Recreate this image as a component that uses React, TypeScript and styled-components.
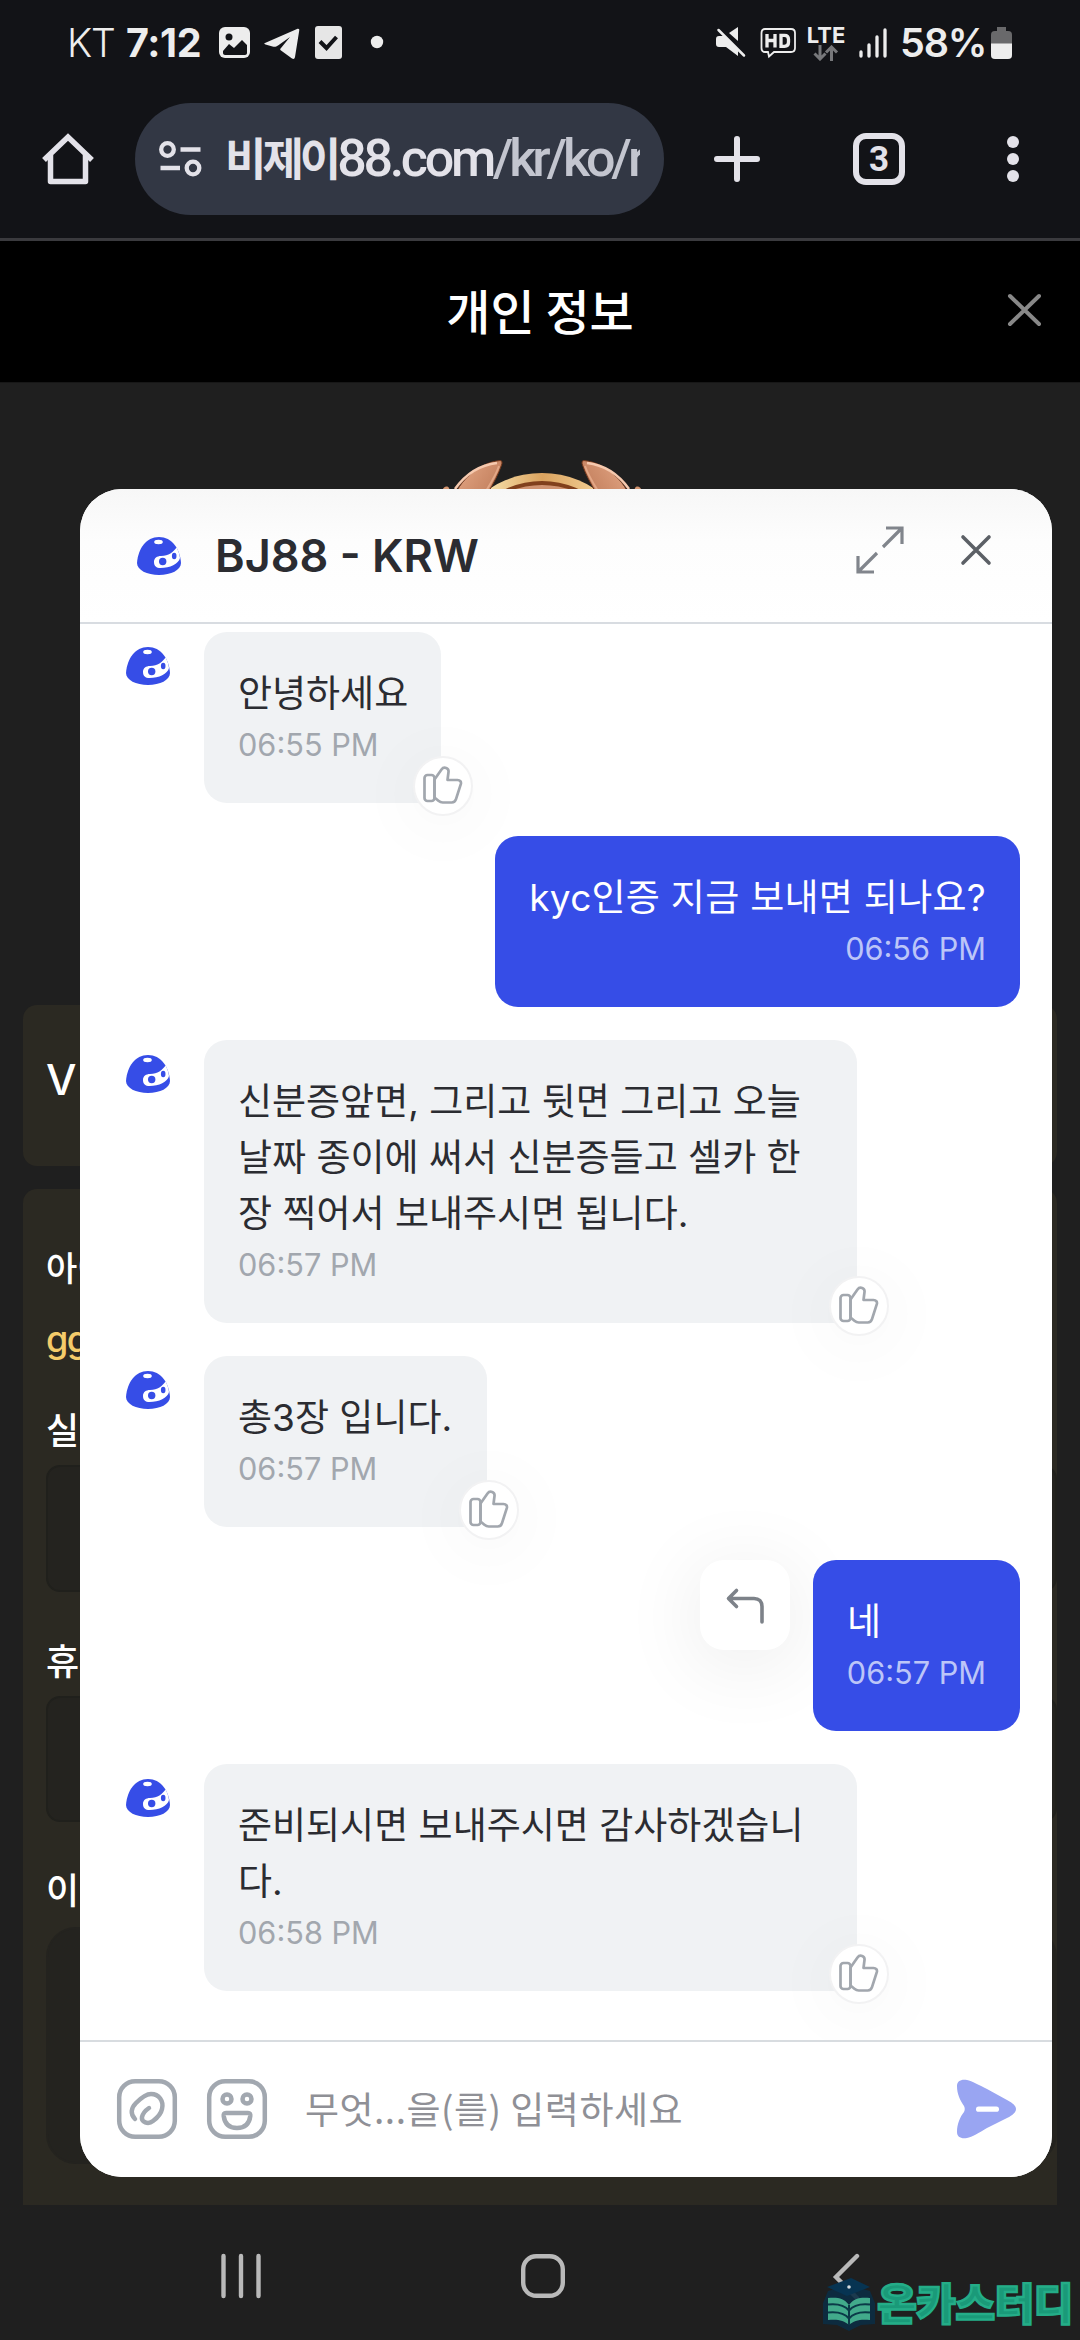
import React from "react";
import styled, { createGlobalStyle } from "styled-components";

const Global = createGlobalStyle`
  * { box-sizing: border-box; }
  body { margin: 0; background: #1f1f1f; }
`;

const Phone = styled.main`
  position: relative;
  width: 1080px;
  height: 2340px;
  overflow: hidden;
  background: #1f1f1f;
  display: flex;
  flex-direction: column;
  font-family: Inter, "Noto Sans CJK KR", sans-serif;
`;

const StatusBar = styled.div`
  height: 86px;
  flex: none;
  background: #121317;
  display: flex;
  align-items: center;
  padding: 0 68px 0 67px;
  color: #ededed;
`;
const Carrier = styled.span`
  font: 300 39px/40px Inter, sans-serif;
  letter-spacing: -1.2px;
  width: 59px;
  white-space: nowrap;
`;
const Clock = styled.span`
  font: 700 39.5px/40px Inter, sans-serif;
  letter-spacing: -0.4px;
  width: 93px;
  white-space: nowrap;
`;
const StatusIcons = styled.svg<{ $push?: boolean }>`
  display: block;
  flex: none;
  margin-left: ${(p) => (p.$push ? "auto" : "0")};
`;
const Network = styled.div`
  display: flex;
  flex-direction: column;
  align-items: center;
  width: 40px;
  margin-left: 9px;
  font: 700 22px/20px Inter, sans-serif;
`;
const Battery = styled.span`
  font: 600 39.5px/40px Inter, sans-serif;
  letter-spacing: -1.2px;
  width: 91px;
  margin-left: 13px;
  white-space: nowrap;
`;

const Toolbar = styled.div`
  height: 155px;
  flex: none;
  background: #121317;
  border-bottom: 3px solid #3a3a3e;
  display: flex;
  align-items: center;
  padding: 0 60px 7px 40px;
`;
const ToolIcon = styled.svg<{ $gap: number }>`
  flex: none;
  display: block;
  margin-left: ${(p) => p.$gap}px;
`;
const Omnibox = styled.div`
  width: 529px;
  height: 112px;
  flex: none;
  margin-left: 39px;
  border-radius: 56px;
  background: #323744;
  display: flex;
  align-items: center;
  padding: 0 23px 0 24px;
`;
const Address = styled.div`
  width: 415px;
  margin-left: 23px;
  overflow: hidden;
  white-space: nowrap;
  font: 500 52px/70px Roboto, "Noto Sans CJK KR", sans-serif;
  letter-spacing: -3.3px;
  color: #e3e2e9;
`;
const Host = styled.span`
  font: 700 45px/60px "Noto Sans CJK KR", sans-serif;
  letter-spacing: -4px;
`;
const Path = styled.span`
  color: #c3c5cf;
  letter-spacing: -4px;
`;
const Tabs = styled.div`
  width: 52px;
  height: 52px;
  flex: none;
  margin-left: 92px;
  border: 6px solid #e3e2e9;
  border-radius: 13px;
  color: #e3e2e9;
  font: 700 35px/41px Roboto, sans-serif;
  text-align: center;
`;

const PageHeader = styled.header`
  height: 142px;
  flex: none;
  background: #000;
  display: grid;
  grid-template-columns: 80px 1fr 80px;
  align-items: center;
  border-bottom: 1px solid #171717;
  padding-bottom: 3px;
`;
const PageTitle = styled.h1`
  margin: 0 0 3px;
  grid-column: 2;
  text-align: center;
  color: #fff;
  font: 500 48px/60px "Noto Sans CJK KR", sans-serif;
`;

const Profile = styled.section`
  flex: 1;
  display: flex;
  flex-direction: column;
  padding: 0 23px;
`;
const Medal = styled.svg`
  display: block;
  margin: 72px auto 0;
  flex: none;
`;
const Card = styled.div<{ $height: number; $top: number; $open?: boolean }>`
  height: ${(p) => p.$height}px;
  margin-top: ${(p) => p.$top}px;
  flex: none;
  background: #2b2922;
  border-radius: ${(p) => (p.$open ? "14px 14px 0 0" : "14px")};
  padding-left: 23px;
  display: flex;
  flex-direction: column;
`;
const Level = styled.div`
  color: #fff;
  font: 500 43px/52px Inter, sans-serif;
  padding-top: 48px;
`;
const Label = styled.div<{ $top: number; $size?: number }>`
  margin-top: ${(p) => p.$top}px;
  height: 50px;
  color: #fff;
  font: 500 ${(p) => p.$size ?? 36}px/50px "Noto Sans CJK KR", sans-serif;
`;
const Account = styled.div`
  margin-top: 22px;
  height: 50px;
  color: #f4cb6a;
  font: 500 36px/50px Inter, sans-serif;
  letter-spacing: -1.5px;
`;
const Field = styled.div<{ $height: number; $top: number; $big?: boolean }>`
  margin-top: ${(p) => p.$top}px;
  height: ${(p) => p.$height}px;
  border-radius: ${(p) => (p.$big ? 30 : 14)}px;
  background: #24231f;
  border: 2px solid ${(p) => (p.$big ? "#24231f" : "#20201c")};
`;

const NavBar = styled.nav`
  height: 135px;
  flex: none;
  display: flex;
  align-items: flex-start;
  padding-top: 47px;
  padding-left: 219px;
`;
const NavIcon = styled.svg<{ $gap?: number }>`
  display: block;
  margin-left: ${(p) => p.$gap ?? 0}px;
`;

const Watermark = styled.div`
  position: absolute;
  right: 7px;
  bottom: 6px;
  display: flex;
  align-items: center;
  gap: 2px;
`;
const Brand = styled.span`
  margin-bottom: 6px;
  font: 900 43px/54px "Noto Sans CJK KR", sans-serif;
  letter-spacing: -0.4px;
  color: #1a9a79;
  -webkit-text-stroke: 2.4px #24ad88;
  white-space: nowrap;
`;

const Widget = styled.section`
  position: absolute;
  left: 80px;
  top: 489px;
  width: 972px;
  height: 1688px;
  border-radius: 42px;
  overflow: hidden;
  background: #fff;
  display: flex;
  flex-direction: column;
  color: #2b2c31;
`;
const WidgetHeader = styled.header`
  height: 135px;
  flex: none;
  border-bottom: 2px solid #d8dce1;
  background: linear-gradient(#f7f7f7, #fdfdfd 40%, #fff);
  display: flex;
  align-items: center;
  padding-left: 57px;
`;
const WidgetTitle = styled.h2`
  margin: 0 0 0 34px;
  width: 640px;
  font: 600 45px/60px Inter, sans-serif;
  letter-spacing: 0;
`;
const Controls = styled.div`
  display: flex;
  align-items: center;
  gap: 54px;
  margin-top: -12px;
  margin-left: 0;
`;
const Thread = styled.div`
  flex: 1;
  overflow: hidden;
  display: flex;
  flex-direction: column;
  gap: 33px;
  padding: 8px 32px 0 46px;
`;
const Row = styled.div<{ $mine?: boolean }>`
  display: flex;
  align-items: flex-start;
  justify-content: ${(p) => (p.$mine ? "flex-end" : "flex-start")};
  gap: ${(p) => (p.$mine ? 23 : 35)}px;
`;
const AvatarSlot = styled.div`
  padding-top: 15px;
  width: 43px;
`;
const Bubble = styled.div<{ $mine?: boolean; $width: number }>`
  position: relative;
  width: ${(p) => p.$width}px;
  padding: 34px 0 35px ${(p) => (p.$mine ? 0 : 34)}px;
  padding-right: ${(p) => (p.$mine ? 34 : 0)}px;
  border-radius: 23px;
  background: ${(p) => (p.$mine ? "#364de7" : "#f0f2f4")};
  color: ${(p) => (p.$mine ? "#fff" : "#2b2c31")};
  text-align: ${(p) => (p.$mine ? "right" : "left")};
`;
const Line = styled.div<{ $spacing: number }>`
  font: 400 37px/56px Inter, "Noto Sans CJK KR", sans-serif;
  height: 56px;
  letter-spacing: ${(p) => p.$spacing}px;
  white-space: nowrap;
`;
const Short = styled(Line)`
  text-align: left;
  padding-left: 34px;
`;
const Time = styled.div<{ $mine?: boolean }>`
  font: 400 30.7px/46px Inter, sans-serif;
  height: 46px;
  color: ${(p) => (p.$mine ? "#bcc5f8" : "#a2a7ae")};
`;
const Like = styled.span`
  position: absolute;
  right: -32px;
  bottom: -13px;
  width: 60px;
  height: 60px;
  border-radius: 50%;
  border: 2px solid #f2f2f3;
  background: #fff;
  box-shadow: 0 8px 60px 20px rgba(0, 0, 0, 0.018);
  display: grid;
  place-items: center;
`;
const Reply = styled.button`
  width: 90px;
  height: 90px;
  padding: 0;
  border: 0;
  border-radius: 24px;
  background: #fff;
  box-shadow: 0 12px 80px 6px rgba(0, 0, 0, 0.07);
  display: grid;
  place-items: center;
`;
const Composer = styled.footer`
  height: 137px;
  flex: none;
  border-top: 2px solid #d8dce0;
  background: #fff;
  display: flex;
  align-items: center;
  padding: 0 34px 1px 36px;
`;
const ComposerIcon = styled.svg<{ $gap?: number }>`
  display: block;
  flex: none;
  margin-left: ${(p) => p.$gap ?? 0}px;
`;
const Placeholder = styled.div`
  flex: 1;
  margin: 0 0 3px 37px;
  font: 400 37px/56px "Noto Sans CJK KR", sans-serif;
  letter-spacing: 0.5px;
  color: #8f9096;
  white-space: nowrap;
`;

const HatIcon = styled.svg`
  display: block;
`;

const Hat = () => (
  <HatIcon width="44" height="38" viewBox="0 0 44 38">
    <path d="M0 26C1 12 9 0 22 0s21 12 22 26c0 7-10 12-22 12S0 33 0 26Z" fill="#364de7" />
    <ellipse cx="21.5" cy="5" rx="4.3" ry="2.2" fill="#fff" />
    <path d="M17 25c0-4 3-6 7-6 8 0 12-4 15.500-8.500 1.800 3 3 7 3.500 10.500-1.500 6-10 10-19.500 10-4 0-6.500-2-6.500-6Z" fill="#fff" />
    <circle cx="25.700" cy="24.500" r="3.700" fill="#364de7" />
    <ellipse cx="37.200" cy="19" rx="2.300" ry="3.200" fill="#364de7" />
  </HatIcon>
);

const LikeBadge = () => (
  <Like>
    <svg width="40" height="40" viewBox="0 0 40 40" fill="none" stroke="#a2a7ae" strokeWidth="2.700" strokeLinejoin="round">
      <rect x="1.500" y="9" width="10" height="26" rx="3" />
      <path d="M11.500 13.500 18.500 3.500c2.500-3.500 7.500-1.500 7 2.500l-1 8h10c2.500 0 4 1.800 3.300 4.200l-4.800 15c-.7 2.200-2 3.300-4.300 3.300h-9c-2 0-3-.7-4.300-1.800l-3.900-3.200Z" />
    </svg>
  </Like>
);

type Message = { lines: string[]; time: string; width: number; mine?: boolean; reply?: boolean; spacing?: number };

const messages: Message[] = [
  { lines: ["안녕하세요"], time: "06:55 PM", width: 237 },
  { lines: ["kyc인증 지금 보내면 되나요?"], time: "06:56 PM", width: 525, mine: true, spacing: 0.28 },
  { lines: ["신분증앞면, 그리고 뒷면 그리고 오늘", "날짜 종이에 써서 신분증들고 셀카 한", "장 찍어서 보내주시면 됩니다."], time: "06:57 PM", width: 653 },
  { lines: ["총3장 입니다."], time: "06:57 PM", width: 283 },
  { lines: ["네"], time: "06:57 PM", width: 207, mine: true, reply: true },
  { lines: ["준비되시면 보내주시면 감사하겠습니", "다."], time: "06:58 PM", width: 653 },
];

const MessageRow = ({ m }: { m: Message }) => {
  const Text = m.reply ? Short : Line;
  return (
    <Row $mine={m.mine}>
      {!m.mine && (
        <AvatarSlot>
          <Hat />
        </AvatarSlot>
      )}
      {m.reply && (
        <Reply aria-label="reply">
          <svg width="40" height="40" viewBox="0 0 40 40" fill="none" stroke="#7d8289" strokeWidth="3.600" strokeLinecap="round" strokeLinejoin="round">
            <path d="M11.500 5.500 3.500 13.500l8 8M3.500 13.500H29c5 0 8 3 8 8V37" />
          </svg>
        </Reply>
      )}
      <Bubble $mine={m.mine} $width={m.width}>
        {m.lines.map((l) => (
          <Text key={l} $spacing={m.spacing ?? 0}>{l}</Text>
        ))}
        <Time $mine={m.mine}>{m.time}</Time>
        {!m.mine && <LikeBadge />}
      </Bubble>
    </Row>
  );
};

const LeftStatus = () => (
  <StatusIcons width="170" height="36" viewBox="219 26 170 36">
    <rect x="219" y="28" width="31" height="31" rx="6" fill="#ededed" />
    <circle cx="229" cy="38" r="3.500" fill="#121317" />
    <path d="M223 52l6-7 5 4 8-8 5 5v8c0 1-1 2-2 2h-20c-1 0-2-1-2-2Z" fill="#121317" />
    <path d="M265 44 297 30c2-.7 2.500.3 2.200 1.800L295 58c-.4 2-1.500 2.500-3 1.500l-11-8c-1-.8-1-1.500-.2-2.300L290 38l-12 8.500c-2 1.400-3.500 1.500-5.500.9l-7-2c-1.500-.4-1.500-1-.5-1.400Z" fill="#ededed" />
    <rect x="315" y="27" width="27" height="33" rx="3" fill="#e6e6e6" />
    <path d="m320 42.500 6.500 6.500 10-11" fill="none" stroke="#121317" strokeWidth="4" />
    <circle cx="377" cy="43" r="6.200" fill="#ededed" />
  </StatusIcons>
);

const MedalHorn = () => (
  <>
    <path d="M453 505c3-20 24-42 48-44.500 2 0 2.500 2 1.500 4.500-3 9-8 18-13 27l-4 13Z" fill="url(#horn)" stroke="#74391d" strokeWidth="1" />
    <path d="M456 489c10-14 24-24 42-26" fill="none" stroke="#f6c9ae" strokeWidth="2.500" />
    <path d="M500 466c-3 9-8 17-13 25" fill="none" stroke="#e3a786" strokeWidth="2" />
    <path d="M443 491c1-4 5-6 7-3l1 4Z" fill="#d3946f" />
  </>
);

export default function App() {
  return (
    <>
      <Global />
      <Phone>
        <StatusBar>
          <Carrier>KT</Carrier>
          <Clock>7:12</Clock>
          <LeftStatus />
          <StatusIcons $push width="82" height="36" viewBox="715 26 82 36">
            <path d="M716 40c0-2 1-3 3-3h5l14 14v6l-12-9h-7c-2 0-3-1-3-3Z" fill="#ededed" />
            <path d="M729 34l9-6v14Z" fill="#ededed" />
            <path d="m718.500 31 25.500 25.500" stroke="#ededed" strokeWidth="2.500" strokeLinecap="round" />
            <path d="M765 30h26c2.500 0 4 1.500 4 4v15c0 2.500-1.500 4-4 4h-17l-5 4.500-1-4.500h-3c-2.200 0-3.500-1.500-3.500-4V34c0-2.500 1.300-4 3.500-4Z" fill="none" stroke="#ededed" strokeWidth="1.800" />
            <path d="M767 35v13.500M775 35v13.500M767 41.500h8M781 36.300v11h3.500c2.500 0 4-1.500 4-4v-3c0-2.500-1.500-4-4-4Z" fill="none" stroke="#ededed" strokeWidth="3.300" />
          </StatusIcons>
          <Network>
            LTE
            <svg width="26" height="16" viewBox="0 0 26 16" fill="none" stroke="#77787b" strokeWidth="3">
              <path d="M7 0v14M1.500 8.500 7 14l5.500-5.500M18.500 16V2M13 7.500 18.500 2 24 7.500" />
            </svg>
          </Network>
          <ToolIcon $gap={13} width="28" height="30" viewBox="0 0 28 30" stroke="#ededed" strokeWidth="3.300" strokeLinecap="round">
            <path d="M2 24v4M10 17v11M18 9v19M26 2v26" />
          </ToolIcon>
          <Battery>58%</Battery>
          <StatusIcons width="21" height="32" viewBox="0 0 21 32">
            <path d="M6 0h9v4h2c3 0 4 1.500 4 4v9H0V8c0-2.500 1-4 4-4h2Z" fill="#69696b" />
            <path d="M0 16.500h21V28c0 2.500-1 4-4 4H4c-3 0-4-1.500-4-4Z" fill="#ededed" />
          </StatusIcons>
        </StatusBar>

        <Toolbar>
          <ToolIcon $gap={0} width="56" height="56" viewBox="0 0 56 56" fill="none" stroke="#e3e2e9" strokeWidth="5.500" strokeLinejoin="round">
            <path d="M4 29 28 6l24 23" strokeLinejoin="miter" />
            <path d="M10.500 24v26.500h35V24" />
          </ToolIcon>
          <Omnibox>
            <ToolIcon $gap={0} width="43" height="38" viewBox="0 0 43 38" fill="none" stroke="#e3e2e9" strokeWidth="4.300">
              <circle cx="8.500" cy="9.500" r="6.300" />
              <path d="M21.500 9.500h20M1.500 28h19.500" />
              <circle cx="34" cy="28" r="6.300" />
            </ToolIcon>
            <Address>
              <Host>비제이</Host>88.com<Path>/kr/ko/r</Path>
            </Address>
          </Omnibox>
          <ToolIcon $gap={49} width="48" height="48" viewBox="0 0 48 48" stroke="#e3e2e9" strokeWidth="6" strokeLinecap="round">
            <path d="M24 4v40M4 24h40" />
          </ToolIcon>
          <Tabs>3</Tabs>
          <ToolIcon $gap={101} width="14" height="50" viewBox="0 0 14 50" fill="#e3e2e9">
            <circle cx="7" cy="8" r="6" />
            <circle cx="7" cy="25" r="6" />
            <circle cx="7" cy="42" r="6" />
          </ToolIcon>
        </Toolbar>

        <PageHeader>
          <PageTitle>개인 정보</PageTitle>
          <svg width="44" height="40" viewBox="-4 0 44 40" stroke="#888" strokeWidth="4" strokeLinecap="round">
            <path d="m6 6 29 28M35 6 6 34" />
          </svg>
        </PageHeader>

        <Profile>
          <Medal width="210" height="50" viewBox="436 455 210 50">
            <defs>
              <linearGradient id="horn" x1="0" y1="0" x2="1" y2="0.6">
                <stop offset="0" stopColor="#e9ad8c" />
                <stop offset="0.6" stopColor="#d08f6d" />
                <stop offset="1" stopColor="#c07d5b" />
              </linearGradient>
              <linearGradient id="ring" gradientUnits="userSpaceOnUse" x1="490" y1="0" x2="597" y2="0">
                <stop offset="0" stopColor="#f6dfa9" />
                <stop offset="0.5" stopColor="#dba35f" />
                <stop offset="1" stopColor="#f1cd92" />
              </linearGradient>
            </defs>
            <circle cx="543" cy="569" r="96" fill="url(#ring)" />
            <circle cx="543" cy="569" r="88" fill="#81401c" />
            <circle cx="543" cy="569" r="84" fill="#cf9270" />
            <MedalHorn />
            <g transform="translate(1086 0) scale(-1 1)">
              <MedalHorn />
            </g>
          </Medal>
          <Card $height={161} $top={500}>
            <Level>V</Level>
          </Card>
          <Card $height={1016} $top={23} $open>
            <Label $top={53} $size={34}>아이</Label>
            <Account>gg</Account>
            <Label $top={39}>실</Label>
            <Field $top={12} $height={127} />
            <Label $top={42}>휴</Label>
            <Field $top={12} $height={126} />
            <Label $top={41}>이</Label>
            <Field $top={14} $height={237} $big />
          </Card>
        </Profile>

        <NavBar>
          <NavIcon width="44" height="48" viewBox="0 0 44 48" stroke="#b9b9b9" strokeWidth="4.400" strokeLinecap="round">
            <path d="M4.500 4v40M22 4v40M39.500 4v40" />
          </NavIcon>
          <NavIcon $gap={256} width="48" height="48" viewBox="0 0 48 48" fill="none" stroke="#b9b9b9" strokeWidth="4.400">
            <rect x="4.200" y="4.200" width="39.600" height="39.600" rx="13" />
          </NavIcon>
          <NavIcon $gap={265} width="30" height="50" viewBox="0 0 30 50" fill="none" stroke="#b9b9b9" strokeWidth="4.400" strokeLinecap="round">
            <path d="M25 4 4 25l21 21" />
          </NavIcon>
        </NavBar>

        <Widget>
          <WidgetHeader>
            <Hat />
            <WidgetTitle>BJ88 - KRW</WidgetTitle>
            <Controls>
              <svg width="50" height="50" viewBox="0 0 50 50" fill="none" stroke="#81858c" strokeWidth="3.200">
                <path d="M28 22 47 3M31 3h16v16M22 28 3 47M3 31v16h16" />
              </svg>
              <svg width="34" height="34" viewBox="0 0 34 34" stroke="#5c6066" strokeWidth="3.600" strokeLinecap="round">
                <path d="m4 4 26 26M30 4 4 30" />
              </svg>
            </Controls>
          </WidgetHeader>
          <Thread>
            {messages.map((m, i) => (
              <MessageRow key={i} m={m} />
            ))}
          </Thread>
          <Composer>
            <ComposerIcon width="62" height="62" viewBox="0 0 62 62" fill="none" stroke="#a2a8b0" strokeWidth="4.500" strokeLinecap="round">
              <rect x="3.200" y="3.200" width="55.600" height="55.600" rx="16" />
              <path d="M19 41c-5-5-4-11 1-16 5-5 10-9 15-9 8 0 13 7 11 15-1 5-5 9-9 12-5 4-12 1-11-4 1-4 4-7 7-9" />
            </ComposerIcon>
            <ComposerIcon $gap={28} width="62" height="62" viewBox="0 0 62 62" fill="none" stroke="#a2a8b0" strokeWidth="4.500">
              <rect x="3.200" y="3.200" width="55.600" height="55.600" rx="16" />
              <ellipse cx="21" cy="21" rx="4.500" ry="4.600" />
              <ellipse cx="41" cy="21" rx="4.500" ry="4.600" />
              <path d="M20 35h22c2 0 2.500 1 2.300 3-1 8-6 12-13.300 12s-12.300-4-13.300-12c-.2-2 .3-3 2.300-3Z" />
            </ComposerIcon>
            <Placeholder>무엇...을(를) 입력하세요</Placeholder>
            <ComposerIcon width="62" height="62" viewBox="0 0 62 62">
              <path d="M1 8C1 3 5 1 11 2c5 1 12 5 20 9l20 11c12 6 12 12 0 18L31 50c-8 5-15 9-20 10-6 1-10-1-10-6 0-8 3-15 7-20 1-2 1-4 0-6-4-6-7-12-7-20Z" fill="#99a5f2" />
              <rect x="20" y="28.500" width="23" height="5.300" rx="2.600" fill="#fff" />
            </ComposerIcon>
          </Composer>
        </Widget>

        <Watermark>
          <svg width="52" height="54" viewBox="0 0 52 54">
            <path d="M0 26 5 14l21-6 21 6 5 12v21l-14 1-12 6-12-6-14-1Z" fill="#0b2c42" opacity=".9" />
            <path d="M4 10 28 1l19 9-23 9Z" fill="#073452" />
            <circle cx="26" cy="10" r="1.800" fill="#d5dce0" />
            <path d="M5 21c9-1 16 0 21 7 5-7 12-8 21-7v22c-9-1-16 0-21 5-5-5-12-6-21-5Z" fill="#42aa8b" />
            <path d="M5 27.500c9-1 16 0 21 6 5-6 12-7 21-6M5 35.500c9-1 16 0 21 6 5-6 12-7 21-6M26 28v20" fill="none" stroke="#0b3a48" strokeWidth="2" />
          </svg>
          <Brand>온카스터디</Brand>
        </Watermark>
      </Phone>
    </>
  );
}
